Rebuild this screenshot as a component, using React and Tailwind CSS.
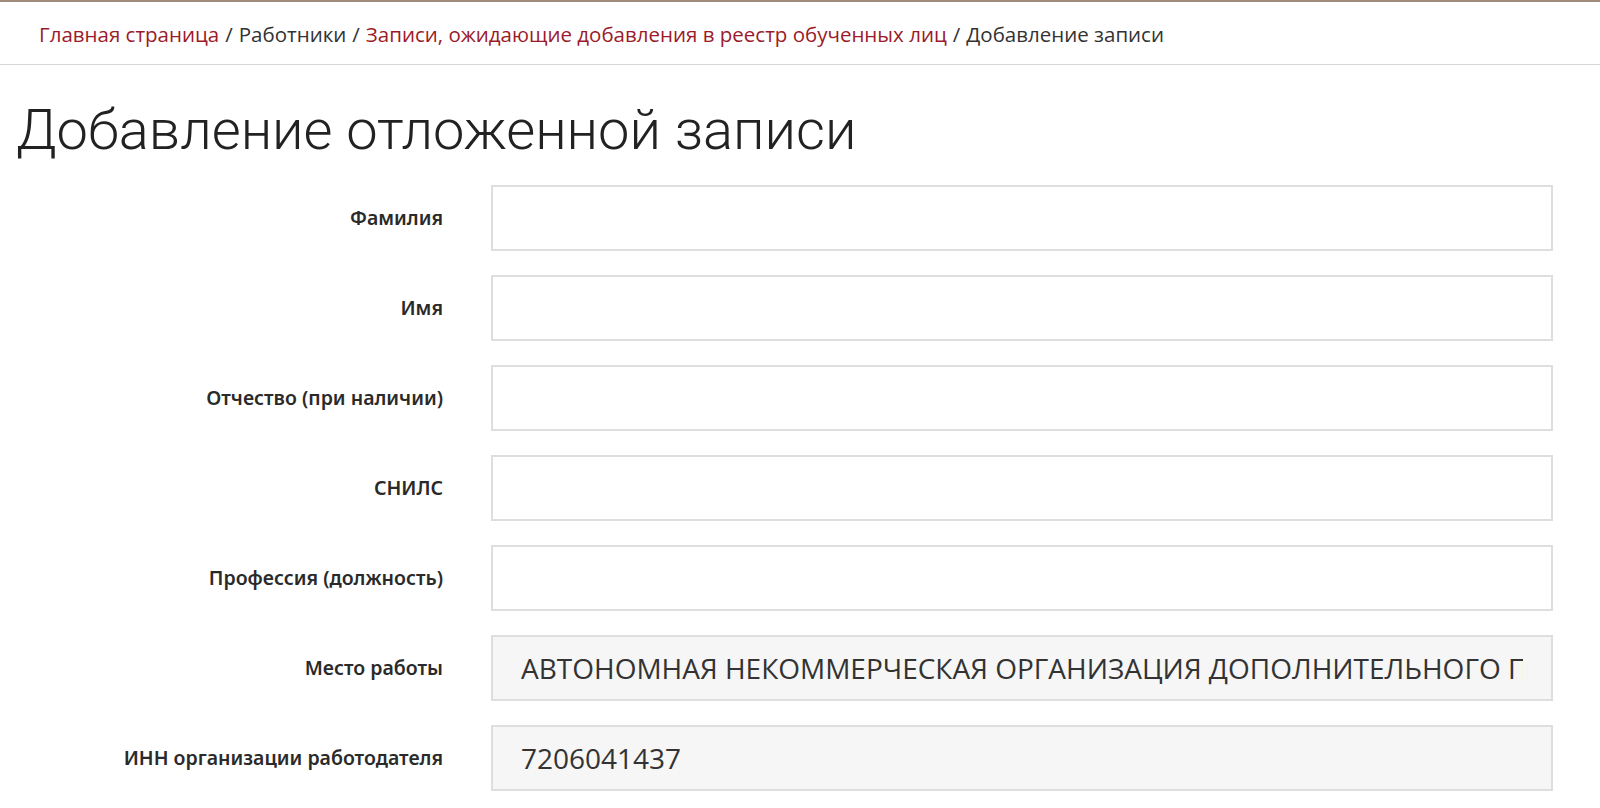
import React from "react";

const fields = [
  { label: "Фамилия", value: "" },
  { label: "Имя", value: "" },
  { label: "Отчество (при наличии)", value: "" },
  { label: "СНИЛС", value: "" },
  { label: "Профессия (должность)", value: "" },
  {
    label: "Место работы",
    value: "АВТОНОМНАЯ НЕКОММЕРЧЕСКАЯ ОРГАНИЗАЦИЯ ДОПОЛНИТЕЛЬНОГО ПРОФЕССИОНАЛЬНОГО ОБРАЗОВАНИЯ",
    readOnly: true,
  },
  { label: "ИНН организации работодателя", value: "7206041437", readOnly: true },
];

export default function App() {
  return (
    <div className="min-h-screen bg-white border-t-2 border-[#a08a7a] font-['Open_Sans',sans-serif] text-[#333]">
      {/* Breadcrumbs */}
      <div className="h-[63px] flex items-center pl-[39px] pt-[2px] border-b border-[#d6d6d6] text-[20.5px]">
        <a className="text-[#9b1b2a]">Главная страница</a>
        <span className="mx-[6px]">/</span>
        <span>Работники</span>
        <span className="mx-[6px]">/</span>
        <a className="text-[#9b1b2a]">Записи, ожидающие добавления в реестр обученных лиц</a>
        <span className="mx-[6px]">/</span>
        <span>Добавление записи</span>
      </div>

      <h1 className="pl-[16px] pt-[27px] pb-[16px] text-[56px] leading-[77px] font-light text-[#222] font-['Roboto',sans-serif]">
        Добавление отложенной записи
      </h1>

      <form className="flex flex-col gap-[24px] pr-[47px]">
        {fields.map((f) => (
          <div key={f.label} className="flex items-center">
            <label className="w-[443px] shrink-0 text-right text-[19.5px] font-semibold text-[#2a2a2a] font-['Noto_Sans',sans-serif]">
              {f.label}
            </label>
            <input
              type="text"
              readOnly={f.readOnly}
              defaultValue={f.value}
              className={`ml-[48px] flex-1 min-w-0 h-[66px] border-2 border-[#dedede] pl-[28px] pr-[28px] text-[28px] text-[#333] outline-none ${
                f.readOnly ? "bg-[#f6f6f6]" : "bg-white"
              }`}
            />
          </div>
        ))}
      </form>
    </div>
  );
}
